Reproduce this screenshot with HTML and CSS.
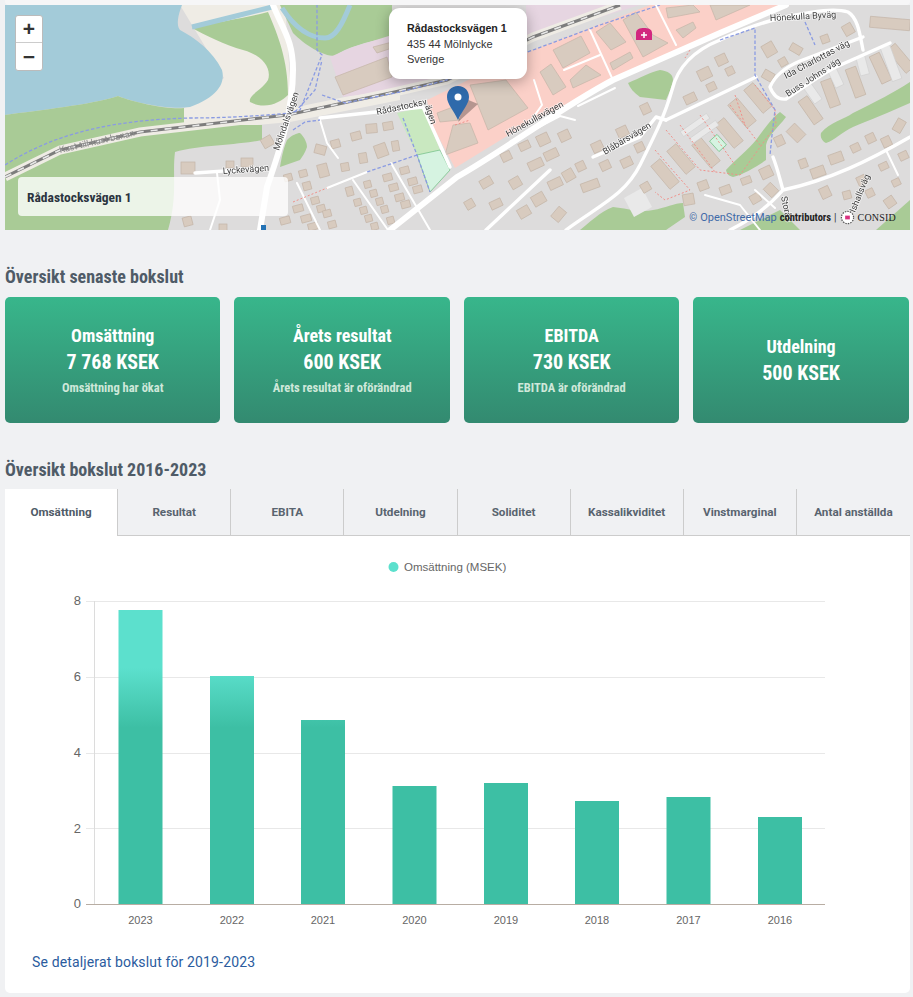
FILE: index.html
```html
<!DOCTYPE html>
<html lang="sv">
<head>
<meta charset="utf-8">
<title>Rådastocksvägen 1</title>
<link rel="stylesheet" href="styles.css">
</head>
<body>
<div class="page">
  <div class="topstrip"></div>
  <section class="map">
    <svg class="map-svg" viewBox="5 5 905 225" width="905" height="225" xmlns="http://www.w3.org/2000/svg">
      <rect class="m-base" x="5" y="5" width="905" height="225"/>
      <path class="m-beach" d="M180 5L285 5L292 108L345 97L400 82L400 100L290 122L184 132L184 108L224 78Z"/>
      <path class="m-water" d="M5 5H182C178 15 176 25 180 30C195 38 212 50 222 70C226 85 215 98 190 107C170 110 135 103 118 96C90 105 40 110 5 115Z"/>
      <path class="m-green" d="M5 115C40 110 90 105 118 96C135 103 170 110 184 108L184 125L262 125L262 140C240 145 200 145 175 152C172 175 178 195 168 230L5 230Z"/>
      <path class="m-green" d="M192 28C215 22 245 18 268 12C278 35 288 60 288 95C280 103 265 110 250 102C248 95 262 90 268 80C272 68 262 55 243 50C225 45 205 35 192 28Z"/>
      <path class="m-green" d="M280 5H392V37C365 42 345 48 335 56C322 56 305 45 293 33Z"/>
      <path class="m-river" d="M192 27L240 15L272 7M282 8C295 28 310 38 325 38C335 38 342 25 350 5"/>
      <path class="m-purple" d="M330 57L353 47L392 35L447 83L343 97Z"/>
      <path class="m-purple" d="M526 5L640 5L526 40Z"/>
      <path class="m-pink" d="M427 100L520 55L650 5L790 5L620 78L530 122L455 168L432 125Z"/>
      <path class="m-green" d="M628 83C640 78 650 72 660 70C668 71 673 74 673 80C672 88 668 95 666 100L640 97C634 93 630 88 628 83Z"/>
      <path class="m-green" d="M726 170C735 160 748 150 756 140C765 128 772 118 780 112L786 117C778 128 768 135 766 145L766 160C755 168 742 175 733 177C729 176 727 174 726 170Z"/>
      <path class="m-green" d="M821 133C830 122 843 120 853 113C875 102 895 92 910 82L910 103C890 112 870 120 853 127C842 132 835 140 826 143C822 141 820 137 821 133Z"/>
      <path class="m-green" d="M580 230C590 222 600 212 613 207C625 208 640 213 653 210C665 208 675 203 683 203L685 217L666 230Z"/>
      <path class="m-green" d="M876 230L910 200L910 230Z"/>
      <path class="m-green" d="M740 230L780 210L800 230Z"/>
      <path class="m-green" d="M280 167C282 155 284 147 287 140C292 135 297 133 300 133C305 138 307 143 307 147C305 153 302 157 300 160Z"/>
      <path class="m-lawn" d="M397 113L423 107L440 150L417 155Z"/>
      <path class="m-pitch" d="M417 155L440 150L450 170L430 192Z"/>
      <rect class="m-pitch" x="-7" y="-5" width="14" height="10" transform="translate(718 143) rotate(48)"/>
      <path class="m-grey" d="M624 198L642 188L652 207L634 217Z"/>

      <path class="m-casing" d="M5 177L60 150L140 132L287 115L390 93L447 80L533 37L620 5"/>
      <path class="m-rail" d="M5 177L60 150L140 132L287 115L390 93L447 80L533 37L620 5"/>
      <path class="m-rail-dash" d="M5 177L60 150L140 132L287 115L390 93L447 80L533 37L620 5"/>

      <g class="m-bld">
        <rect x="-5" y="-5" width="11" height="10" transform="translate(267 142) rotate(-30)"/>
        <rect x="-7" y="-6" width="14" height="12" transform="translate(188 168)"/>
        <rect x="-4" y="-3" width="8" height="7" transform="translate(230 164)"/>
        <rect x="-6" y="-4" width="12" height="9" transform="translate(247 162)"/>
        <rect x="-5" y="-4" width="11" height="9" transform="translate(320 149) rotate(15)"/>
        <rect x="-4" y="-4" width="9" height="8" transform="translate(335 144) rotate(-15)"/>
        <rect x="-5" y="-4" width="10" height="8" transform="translate(356 136) rotate(-15)"/>
        <rect x="-5" y="-4" width="11" height="9" transform="translate(371 128) rotate(-5)"/>
        <rect x="-5" y="-4" width="10" height="8" transform="translate(388 126) rotate(-10)"/>
        <rect x="-4" y="-5" width="8" height="10" transform="translate(363 158) rotate(-10)"/>
        <rect x="-4" y="-4" width="8" height="8" transform="translate(345 167) rotate(-10)"/>
        <rect x="-5" y="-6" width="10" height="13" transform="translate(323 170) rotate(-15)"/>
        <rect x="-6" y="-6" width="12" height="13" transform="translate(381 150) rotate(-20)"/>
        <rect x="-3" y="-5" width="7" height="10" transform="translate(395 146) rotate(-10)"/>
        <rect x="-4" y="-3" width="8" height="7" transform="translate(288 177) rotate(-15)"/>
        <rect x="-4" y="-3" width="8" height="7" transform="translate(303 173) rotate(-15)"/>
        <rect x="-4" y="-4" width="8" height="8" transform="translate(307 186) rotate(-15)"/>
        <rect x="-3" y="-4" width="7" height="9" transform="translate(349 191) rotate(-15)"/>
        <rect x="-3" y="-3" width="7" height="7" transform="translate(367 184) rotate(-15)"/>
        <rect x="-3" y="-3" width="7" height="7" transform="translate(373 193) rotate(-15)"/>
        <rect x="-4" y="-3" width="9" height="7" transform="translate(387 177) rotate(-15)"/>
        <rect x="-4" y="-3" width="9" height="7" transform="translate(404 170) rotate(-15)"/>
        <rect x="-4" y="-3" width="9" height="7" transform="translate(412 181) rotate(-15)"/>
        <rect x="-4" y="-3" width="9" height="7" transform="translate(417 189) rotate(-15)"/>
        <rect x="-4" y="-3" width="9" height="7" transform="translate(393 187) rotate(-15)"/>
        <rect x="-4" y="-3" width="9" height="7" transform="translate(399 197) rotate(-15)"/>
        <rect x="-4" y="-3" width="9" height="7" transform="translate(405 204) rotate(-15)"/>
        <rect x="-3" y="-3" width="7" height="7" transform="translate(357 202) rotate(-15)"/>
        <rect x="-3" y="-3" width="7" height="7" transform="translate(363 210) rotate(-15)"/>
        <rect x="-3" y="-3" width="7" height="7" transform="translate(368 218) rotate(-15)"/>
        <rect x="-3" y="-3" width="7" height="7" transform="translate(374 226) rotate(-15)"/>
        <rect x="-3" y="-3" width="7" height="7" transform="translate(379 201) rotate(-15)"/>
        <rect x="-3" y="-3" width="7" height="7" transform="translate(384 209) rotate(-15)"/>
        <rect x="-3" y="-3" width="7" height="7" transform="translate(390 220) rotate(-15)"/>
        <rect x="-4" y="-3" width="8" height="7" transform="translate(315 200) rotate(-15)"/>
        <rect x="-4" y="-3" width="8" height="7" transform="translate(321 208) rotate(-15)"/>
        <rect x="-5" y="-3" width="10" height="7" transform="translate(298 208) rotate(-15)"/>
        <rect x="-5" y="-3" width="10" height="7" transform="translate(306 218) rotate(-15)"/>
        <rect x="-4" y="-3" width="8" height="7" transform="translate(327 213) rotate(-15)"/>
        <rect x="-4" y="-3" width="8" height="7" transform="translate(332 224) rotate(-15)"/>
        <rect x="-5" y="-3" width="10" height="7" transform="translate(285 220) rotate(-15)"/>
        <rect x="-5" y="-3" width="10" height="7" transform="translate(313 226) rotate(-15)"/>
        <rect x="-4" y="-4" width="9" height="9" transform="translate(187 221) rotate(-15)"/>
        <rect x="-4" y="-3" width="8" height="7" transform="translate(223 227)"/>
        <rect x="-5" y="-5" width="13" height="11" transform="translate(703 74) rotate(-25)"/>
        <rect x="-5" y="-5" width="11" height="10" transform="translate(721 60) rotate(-25)"/>
        <rect x="-4" y="-4" width="8" height="8" transform="translate(730 71) rotate(-25)"/>
        <rect x="-4" y="-4" width="9" height="8" transform="translate(711 87) rotate(-25)"/>
        <rect x="-6" y="-4" width="12" height="9" transform="translate(690 98) rotate(-25)"/>
        <rect x="-4" y="-5" width="9" height="10" transform="translate(645 109) rotate(-25)"/>
        <rect x="-5" y="-5" width="11" height="10" transform="translate(622 132) rotate(-25)"/>
        <rect x="-5" y="-5" width="11" height="10" transform="translate(597 147) rotate(-25)"/>
        <rect x="-5" y="-5" width="11" height="10" transform="translate(564 136) rotate(-25)"/>
        <rect x="-6" y="-5" width="12" height="11" transform="translate(543 139) rotate(-25)"/>
        <rect x="-5" y="-4" width="11" height="8" transform="translate(524 146) rotate(-25)"/>
        <rect x="-5" y="-4" width="10" height="9" transform="translate(506 156) rotate(-25)"/>
        <rect x="-7" y="-4" width="15" height="9" transform="translate(535 164) rotate(-25)"/>
        <rect x="-7" y="-4" width="14" height="9" transform="translate(551 154) rotate(-25)"/>
        <rect x="-4" y="-4" width="9" height="9" transform="translate(580 166) rotate(-25)"/>
        <rect x="-5" y="-4" width="10" height="9" transform="translate(605 165) rotate(-25)"/>
        <rect x="-5" y="-4" width="11" height="9" transform="translate(626 162) rotate(-25)"/>
        <rect x="-4" y="-4" width="9" height="9" transform="translate(639 147) rotate(-25)"/>
        <rect x="-6" y="-4" width="12" height="9" transform="translate(486 182) rotate(-30)"/>
        <rect x="-5" y="-5" width="11" height="10" transform="translate(515 183) rotate(-30)"/>
        <rect x="-6" y="-4" width="12" height="8" transform="translate(496 204) rotate(-25)"/>
        <rect x="-4" y="-4" width="9" height="9" transform="translate(469 204) rotate(-30)"/>
        <rect x="-6" y="-5" width="12" height="10" transform="translate(524 212) rotate(-30)"/>
        <rect x="-6" y="-5" width="13" height="11" transform="translate(538 199) rotate(-30)"/>
        <rect x="-7" y="-4" width="14" height="9" transform="translate(555 183) rotate(-25)"/>
        <rect x="-5" y="-5" width="11" height="11" transform="translate(568 175) rotate(-30)"/>
        <rect x="-9" y="-4" width="18" height="9" transform="translate(590 185) rotate(-20)"/>
        <rect x="-5" y="-6" width="10" height="13" transform="translate(559 214) rotate(40)"/>
        <rect x="-4" y="-4" width="9" height="9" transform="translate(645 187) rotate(-30)"/>
        <rect x="-5" y="-4" width="10" height="9" transform="translate(703 185) rotate(-20)"/>
        <rect x="-5" y="-4" width="11" height="8" transform="translate(725 190) rotate(-20)"/>
        <rect x="-5" y="-3" width="10" height="7" transform="translate(746 180) rotate(-20)"/>
        <rect x="-5" y="-4" width="10" height="9" transform="translate(755 198) rotate(-30)"/>
        <rect x="-5" y="-6" width="10" height="12" transform="translate(771 190) rotate(-45)"/>
        <rect x="-6" y="-5" width="12" height="11" transform="translate(766 172) rotate(-25)"/>
        <rect x="-5" y="-5" width="11" height="11" transform="translate(688 199) rotate(-10)"/>
        <rect x="-4" y="-4" width="8" height="9" transform="translate(803 163) rotate(-20)"/>
        <rect x="-7" y="-5" width="14" height="10" transform="translate(818 172) rotate(-20)"/>
        <rect x="-7" y="-5" width="14" height="10" transform="translate(836 158) rotate(-20)"/>
        <rect x="-4" y="-4" width="9" height="8" transform="translate(855 148) rotate(-25)"/>
        <rect x="-4" y="-4" width="9" height="9" transform="translate(870 138) rotate(-25)"/>
        <rect x="-4" y="-5" width="9" height="10" transform="translate(886 142) rotate(-25)"/>
        <rect x="-4" y="-4" width="9" height="8" transform="translate(903 156) rotate(-25)"/>
        <rect x="-4" y="-6" width="9" height="13" transform="translate(899 125) rotate(30)"/>
        <rect x="-4" y="-3" width="8" height="7" transform="translate(896 182) rotate(-25)"/>
        <rect x="-4" y="-3" width="9" height="7" transform="translate(883 166) rotate(-25)"/>
        <rect x="-4" y="-4" width="9" height="9" transform="translate(861 180) rotate(-25)"/>
        <rect x="-5" y="-5" width="10" height="11" transform="translate(825 192) rotate(-25)"/>
        <rect x="-4" y="-4" width="8" height="8" transform="translate(847 195) rotate(-15)"/>
        <rect x="-4" y="-4" width="8" height="8" transform="translate(870 193) rotate(-25)"/>
        <rect x="-5" y="-5" width="10" height="10" transform="translate(890 202) rotate(-35)"/>
        <rect x="-6" y="-8" width="12" height="16" transform="translate(796 133) rotate(-45)"/>
        <rect x="-4" y="-5" width="9" height="10" transform="translate(779 141) rotate(-25)"/>
        <rect x="-5" y="-5" width="10" height="11" transform="translate(848 29) rotate(-30)"/>
        <rect x="-4" y="-4" width="8" height="8" transform="translate(825 39) rotate(-20)"/>
        <rect x="-6" y="-4" width="12" height="8" transform="translate(796 49) rotate(30)"/>
        <rect x="-4" y="-4" width="8" height="8" transform="translate(783 62) rotate(-30)"/>
        <rect x="-6" y="-6" width="12" height="13" transform="translate(769 49) rotate(-30)"/>
        <rect x="-5" y="-4" width="11" height="9" transform="translate(768 75) rotate(30)"/>
        <rect x="-15" y="-6" width="30" height="12" transform="translate(758 98) rotate(50)"/>
        <rect x="-15" y="-6" width="30" height="12" transform="translate(742 113) rotate(50)"/>
        <rect x="-15" y="-6" width="30" height="12" transform="translate(729 133) rotate(50)"/>
        <rect x="-15" y="-6" width="30" height="12" transform="translate(706 153) rotate(50)"/>
        <rect x="-15" y="-6" width="30" height="12" transform="translate(681 159) rotate(50)"/>
        <rect x="-15" y="-6" width="30" height="12" transform="translate(665 174) rotate(50)"/>
        <rect x="-14" y="-5" width="28" height="11" transform="translate(811 110) rotate(55)"/>
        <rect x="-14" y="-5" width="28" height="11" transform="translate(831 93) rotate(70)"/>
        <rect x="-15" y="-5" width="30" height="11" transform="translate(856 82) rotate(70)"/>
        <rect x="-15" y="-5" width="30" height="11" transform="translate(881 68) rotate(65)"/>
        <rect x="-15" y="-5" width="30" height="11" transform="translate(901 58) rotate(50)"/>
        <rect x="-20" y="-5" width="40" height="11" transform="translate(890 23) rotate(5)"/>
        <path d="M553 50L581 36L590 53L563 68Z"/>
        <path d="M540 72L551 64L566 87L553 95Z"/>
        <path d="M570 80L586 65L601 75L573 88Z"/>
        <path d="M596 32L610 23L626 42L611 50Z"/>
        <path d="M610 63L630 52L633 58L613 70Z"/>
        <path d="M623 20L636 12L653 35L668 43L643 57Z"/>
        <path d="M676 30L693 22L696 28L683 38Z"/>
        <path d="M666 8L693 5L700 12L668 18Z"/>
        <path d="M710 5L750 5L716 20Z"/>
        <path d="M470 85L506 80L528 108L488 130Z"/>
        <path d="M453 125L470 123L478 143L445 155Z"/>
        <path d="M437 113L453 107L460 120L440 122Z"/>
        <path d="M335 77L387 57L392 77L343 95Z"/>
        <path d="M373 47L392 42L392 48L377 53Z"/>
      </g>
      <g class="m-lightb">
        <rect x="-10" y="-4" width="20" height="9" transform="translate(813 93) rotate(55)"/>
        <rect x="-10" y="-4" width="20" height="9" transform="translate(836 77) rotate(65)"/>
        <rect x="-10" y="-4" width="20" height="9" transform="translate(863 65) rotate(75)"/>
        <rect x="-18" y="-5" width="36" height="10" transform="translate(891 63) rotate(70)"/>
        <rect x="-16" y="-3" width="32" height="6" transform="translate(695 125) rotate(-35)"/>
        <rect x="-16" y="-3" width="32" height="6" transform="translate(704 132) rotate(-35)"/>
      </g>

      <g class="m-road-l">
        <path d="M273 5C283 30 293 40 293 70C293 110 280 150 267 187L260 230"/>
        <path d="M390 230L457 177C505 150 560 108 613 80L720 33L786 5"/>
      </g>
      <g class="m-road-m">
        <path d="M320 118L423 107L450 167"/>
        <path d="M566 230C600 205 625 195 640 165C655 135 665 115 672 90C678 65 695 50 720 40"/>
        <path d="M666 120L756 77"/>
        <path d="M770 87C775 75 786 67 800 61L863 37M770 87C773 95 778 100 786 99C800 90 820 75 836 67L890 43"/>
        <path d="M783 190C830 180 870 160 910 137M773 157C778 170 780 180 783 190C770 205 750 220 730 230"/>
        <path d="M550 170L486 230"/>
        <path d="M593 157L640 137L656 117L666 120"/>
        <path d="M720 40C745 28 770 20 790 16C815 11 835 8 848 12C858 18 860 35 863 50"/>
        <path d="M195 173L267 168"/>
      </g>
      <g class="m-road-s">
        <path d="M217 173L220 200L210 230"/>
        <path d="M320 120L327 143L338 158"/>
        <path d="M327 188L367 172"/>
        <path d="M353 180L388 230"/>
        <path d="M297 183L320 230"/>
        <path d="M391 163L430 230"/>
        <path d="M510 142L560 116L575 120"/>
        <path d="M578 106L615 88"/>
        <path d="M534 80L542 105L530 122"/>
        <path d="M590 30L612 78"/>
        <path d="M656 5L676 45"/>
        <path d="M705 195L740 205L760 230"/>
        <path d="M755 190L775 208"/>
        <path d="M886 150L898 175"/>
        <path d="M564 70L600 55"/>
      </g>
      <g class="m-dash">
        <path d="M5 165C60 130 120 120 190 118C230 118 270 115 290 113L300 110L318 65L322 55L317 50L317 5"/>
        <path d="M295 112L315 90L322 60"/>
        <path d="M322 95L345 103L400 92L447 80L533 50L600 25L660 5"/>
        <path d="M293 130L305 122L320 120"/>
        <path d="M367 172L417 155M403 118L417 155L430 192"/>
        <path d="M720 40L755 28L755 75L775 110L772 135L770 155"/>
        <path d="M805 22L815 45"/>
      </g>
      <g class="m-dash-red">
        <path d="M293 202L327 188"/>
        <path d="M455 125L470 120M690 50L685 58"/>
        <path d="M666 130L700 170L740 175L776 125L775 110L755 85"/>
        <path d="M655 150L690 190L665 200L655 192M680 125L715 172M700 115L735 165M730 105L760 145M735 95L745 125"/>
      </g>

      <text class="m-label-rail" transform="translate(60 153) rotate(-13)">Kust-till-kust-banan</text>
      <g class="m-label">
        <text transform="translate(223 174) rotate(-4)">Lyckevägen</text>
        <text transform="translate(279 151) rotate(-71)">Mölndalsvägen</text>
        <text transform="translate(377 115) rotate(-12)">Rådastocksv</text>
        <text transform="translate(425 106) rotate(72)">ägen</text>
        <text transform="translate(508 137) rotate(-29)">Hönekullavägen</text>
        <text transform="translate(605 155) rotate(-31)">Blåbärsvägen</text>
        <text transform="translate(770 21) rotate(-3)">Hönekulla Byväg</text>
        <text transform="translate(786 79) rotate(-28)">Ida Charlottas väg</text>
        <text transform="translate(788 97) rotate(-33)">Buss Johns väg</text>
        <text transform="translate(855 213) rotate(-68)">Ishallsväg</text>
        <text transform="translate(781 197) rotate(78)">Storås</text>
      </g>

      <path class="m-hosp" d="M636 40L636 33C636 29 640 28 644 28C648 28 652 29 652 33L652 40Z"/>
      <path class="m-hosp-cross" d="M644 32V38M641 35H647"/>
      <path class="m-pin-shadow" d="M458 122L478 104L466 99Z"/>
      <path class="m-pin" d="M458 86C451 86 447 91 447 97C447 104 454 111 458 120C462 111 469 104 469 97C469 91 465 86 458 86Z"/>
      <circle class="m-pin-dot" cx="458" cy="97" r="3.500"/>
      <rect class="m-bus" x="261" y="225" width="5" height="5"/>
    </svg>

    <div class="zoom-ctl">
      <div class="zoom-btn zoom-btn-top">+</div>
      <div class="zoom-btn">−</div>
    </div>
    <div class="popup">
      <strong class="popup-name">Rådastocksvägen 1</strong>
      <span>435 44 Mölnlycke</span>
      <span>Sverige</span>
    </div>
    <div class="addr">Rådastocksvägen 1</div>
    <div class="attrib">
      <span class="attrib-c">©</span>
      <a class="attrib-link">OpenStreetMap</a>
      <b class="attrib-b">contributors</b>
      <span class="attrib-bar">|</span>
      <svg class="consid-logo" viewBox="0 0 16 16" width="15" height="15" xmlns="http://www.w3.org/2000/svg">
        <circle class="logo-ring" cx="8" cy="8" r="6.500"/>
        <rect class="logo-core" x="5.500" y="6" width="5" height="4"/>
      </svg>
      <span class="attrib-consid">CONSID</span>
    </div>
  </section>

  <h2 class="heading heading-first">Översikt senaste bokslut</h2>
  <div class="cards">
    <div class="card">
      <div class="card-title">Omsättning</div>
      <div class="card-value">7 768 KSEK</div>
      <div class="card-sub">Omsättning har ökat</div>
    </div>
    <div class="card">
      <div class="card-title">Årets resultat</div>
      <div class="card-value">600 KSEK</div>
      <div class="card-sub">Årets resultat är oförändrad</div>
    </div>
    <div class="card">
      <div class="card-title">EBITDA</div>
      <div class="card-value">730 KSEK</div>
      <div class="card-sub">EBITDA är oförändrad</div>
    </div>
    <div class="card">
      <div class="card-title">Utdelning</div>
      <div class="card-value">500 KSEK</div>
    </div>
  </div>

  <h2 class="heading heading-second">Översikt bokslut 2016-2023</h2>
  <section class="panel">
    <div class="tabs">
      <div class="tab tab-active">Omsättning</div>
      <div class="tab">Resultat</div>
      <div class="tab">EBITA</div>
      <div class="tab">Utdelning</div>
      <div class="tab">Soliditet</div>
      <div class="tab">Kassalikviditet</div>
      <div class="tab">Vinstmarginal</div>
      <div class="tab">Antal anställda</div>
    </div>
    <svg class="chart" viewBox="5 536 905 396" width="905" height="396" xmlns="http://www.w3.org/2000/svg">
      <defs>
        <linearGradient id="barfill" gradientUnits="userSpaceOnUse" x1="0" y1="668" x2="0" y2="728">
          <stop offset="0" stop-color="#5ce0cd"/>
          <stop offset="1" stop-color="#3dbfa4"/>
        </linearGradient>
      </defs>
      <circle class="c-dot" cx="393.500" cy="567" r="5"/>
      <text class="c-legend" x="404" y="571">Omsättning (MSEK)</text>
      <path class="c-grid" d="M86 601.500H825M86 677.500H825M86 753.500H825M86 828.500H825"/>
      <path class="c-axis" d="M94.500 601V904"/>
      <g class="c-ylab">
        <text x="81" y="605">8</text>
        <text x="81" y="681">6</text>
        <text x="81" y="757">4</text>
        <text x="81" y="833">2</text>
        <text x="81" y="908">0</text>
      </g>
      <g class="c-bars">
        <rect x="118.500" y="610" width="44" height="294"/>
        <rect x="210" y="676" width="44" height="228"/>
        <rect x="301" y="720" width="44" height="184"/>
        <rect x="392.500" y="786" width="44" height="118"/>
        <rect x="484" y="783" width="44" height="121"/>
        <rect x="575" y="801" width="44" height="103"/>
        <rect x="666.500" y="797" width="44" height="107"/>
        <rect x="758" y="817" width="44" height="87"/>
      </g>
      <path class="c-base" d="M86 904.500H825"/>
      <g class="c-xlab">
        <text x="140.500" y="924">2023</text>
        <text x="232" y="924">2022</text>
        <text x="323" y="924">2021</text>
        <text x="414.500" y="924">2020</text>
        <text x="506" y="924">2019</text>
        <text x="597" y="924">2018</text>
        <text x="688.500" y="924">2017</text>
        <text x="780" y="924">2016</text>
      </g>
    </svg>
    <a class="detail-link">Se detaljerat bokslut för 2019-2023</a>
  </section>
</div>
</body>
</html>
```

FILE: styles.css
```css
* { box-sizing: border-box; }
html, body { margin: 0; padding: 0; }
body {
  background: #f0f1f3;
  font-family: "Roboto", "Liberation Sans", sans-serif;
  color: #4f5b67;
}
.page { width: 913px; height: 997px; padding: 0 3px 4px 5px; overflow: hidden; }
.topstrip { height: 5px; background: #f6f6f7; border-radius: 0 0 4px 4px; }

/* map */
.map { position: relative; height: 225px; overflow: hidden; }
.map-svg { display: block; filter: blur(.4px); }
.m-base { fill: #dddcdc; }
.m-water { fill: #a3cbd9; }
.m-beach { fill: #efece5; }
.m-green { fill: #a9cb96; }
.m-lawn { fill: #c9e8c0; }
.m-pitch { fill: #d6f3e1; stroke: #6cbf80; stroke-width: 0.7; }
.m-grey { fill: #e9e9e9; }
.m-river { fill: none; stroke: #a3cbd9; stroke-width: 5; }
.m-purple { fill: #e6d5e1; }
.m-pink { fill: #fbd0c8; }
.m-casing { fill: none; stroke: #efece5; stroke-width: 9; }
.m-rail { fill: none; stroke: #7d7d7d; stroke-width: 3; }
.m-rail-dash { fill: none; stroke: #e8e8e8; stroke-width: 1.6; stroke-dasharray: 7 7; }
.m-bld rect, .m-bld path { fill: #d8cbbf; stroke: #c4b5a8; stroke-width: 0.7; }
.m-lightb rect { fill: #e9e9e9; stroke: #cfcfcf; stroke-width: 0.6; }
.m-road-l path, .m-road-m path, .m-road-s path { fill: none; stroke: #fff; stroke-linejoin: round; stroke-linecap: round; }
.m-road-l path { stroke-width: 6; }
.m-road-m path { stroke-width: 3.400; }
.m-road-s path { stroke-width: 2; }
.m-dash path { fill: none; stroke: #8a9be2; stroke-width: 1.300; stroke-dasharray: 3.500 2; }
.m-dash-red path { fill: none; stroke: #f0908a; stroke-width: 1; stroke-dasharray: 2 2; }
.m-label text { font-family: "Roboto", sans-serif; font-size: 9px; fill: #3c3c3c; stroke: #fff; stroke-width: 1.500px; paint-order: stroke; stroke-opacity: .7; }
.m-label-rail { font-family: "Roboto", sans-serif; font-size: 9px; fill: #8c8c8c; }
.m-hosp { fill: #d2267f; }
.m-hosp-cross { fill: none; stroke: #fff; stroke-width: 1.500; }
.m-pin-shadow { fill: rgba(0, 0, 0, .28); }
.m-pin { fill: #2f6aab; }
.m-pin-dot { fill: #fff; }
.m-bus { fill: #2473b5; }

.zoom-ctl {
  position: absolute; left: 10px; top: 10px; width: 28px;
  border: 1px solid #bbb; border-radius: 3px; background: #fff; overflow: hidden;
}
.zoom-btn {
  height: 27px; display: flex; align-items: center; justify-content: center;
  font: 700 21px "Liberation Sans", sans-serif; color: #333;
}
.zoom-btn-top { border-bottom: 1px solid #ccc; }

.popup {
  position: absolute; left: 384px; top: 3px; width: 138px; height: 71px;
  padding: 13px 0 0 18px; background: #fff; border-radius: 11px;
  box-shadow: 0 3px 14px rgba(0, 0, 0, .3);
  font: 11px/15.500px "Liberation Sans", sans-serif; color: #333;
  display: flex; flex-direction: column; white-space: nowrap;
}
.popup-name { font-weight: 700; font-size: 10.700px; color: #222; }

.addr {
  position: absolute; left: 13px; top: 172px; width: 270px; height: 39px;
  padding-left: 9px; display: flex; align-items: center;
  background: rgba(255, 255, 255, .78); border-radius: 4px;
  font: 700 13.500px "Roboto", sans-serif; font-stretch: 75%; color: #2b3440;
}
.attrib {
  position: absolute; right: 14px; top: 205px; height: 14px;
  display: flex; align-items: center; gap: 3px;
  font: 10px "Roboto", sans-serif; color: #333; white-space: nowrap;
}
.attrib-c, .attrib-link { color: #3f6aa8; }
.attrib-link { font-size: 11px; }
.attrib-b { font-weight: 700; color: #222; font-size: 10.500px; font-stretch: 75%; }
.consid-logo { display: block; }
.logo-ring { fill: #fff; stroke: #555; stroke-width: 1.300; stroke-dasharray: 1.500 1.200; }
.logo-core { fill: #d8307f; }
.attrib-consid { font: 10px "Liberation Serif", serif; color: #222; letter-spacing: .2px; }

/* headings */
.heading {
  margin: 0; height: 22px; line-height: 22px;
  font-family: "Roboto", sans-serif; font-stretch: 75%; font-size: 18px; font-weight: 700; color: #4f5b67;
}
.heading-first { margin-top: 36px; margin-bottom: 9px; }
.heading-second { margin-top: 36px; margin-bottom: 8px; }

/* cards */
.cards { display: grid; grid-template-columns: repeat(4, 1fr); gap: 14px; width: 903.800px; }
.card {
  height: 126px; border-radius: 5px; color: #fff; text-align: center;
  background: linear-gradient(180deg, #38b68b 0%, #338a70 100%);
  display: flex; flex-direction: column; justify-content: center;
  font-family: "Roboto", sans-serif; font-stretch: 75%; font-weight: 700;
}
.card-title { font-size: 18px; line-height: 26px; }
.card-value { font-size: 20px; line-height: 26px; }
.card-sub { font-size: 12.500px; line-height: 19px; margin-top: 3px; color: #cfe8da; }

/* panel */
.panel { height: 504px; background: #fff; border-radius: 0 0 5px 5px; }
.tabs { display: grid; grid-template-columns: repeat(8, 1fr); height: 47px; }
.tab {
  display: flex; align-items: center; justify-content: center; padding-bottom: 1px;
  background: #f0f1f3; border-right: 1px solid #ccc; border-bottom: 1px solid #ccc;
  font-size: 11.700px; font-weight: 700; color: #59646f;
}
.tab:last-child { border-right: 0; }
.tab-active { background: #fff; border-bottom: 0; color: #4f5b67; padding-bottom: 2px; }
.chart { display: block; }
.c-dot { fill: #5ce0cd; }
.c-legend { font: 11.500px "Liberation Sans", sans-serif; fill: #666; }
.c-grid { fill: none; stroke: #e8e8e8; stroke-width: 1; }
.c-axis { fill: none; stroke: #dcdcdc; stroke-width: 1; }
.c-base { fill: none; stroke: #b8ada3; stroke-width: 1; }
.c-ylab text { font: 13px "Liberation Sans", sans-serif; fill: #666; text-anchor: end; }
.c-xlab text { font: 11px "Liberation Sans", sans-serif; fill: #666; text-anchor: middle; }
.c-bars rect { fill: url(#barfill); }
.detail-link {
  display: block; margin: 21px 0 0 27px; line-height: 18px; letter-spacing: .14px;
  font-size: 14px; color: #2b5c9e;
}
```
